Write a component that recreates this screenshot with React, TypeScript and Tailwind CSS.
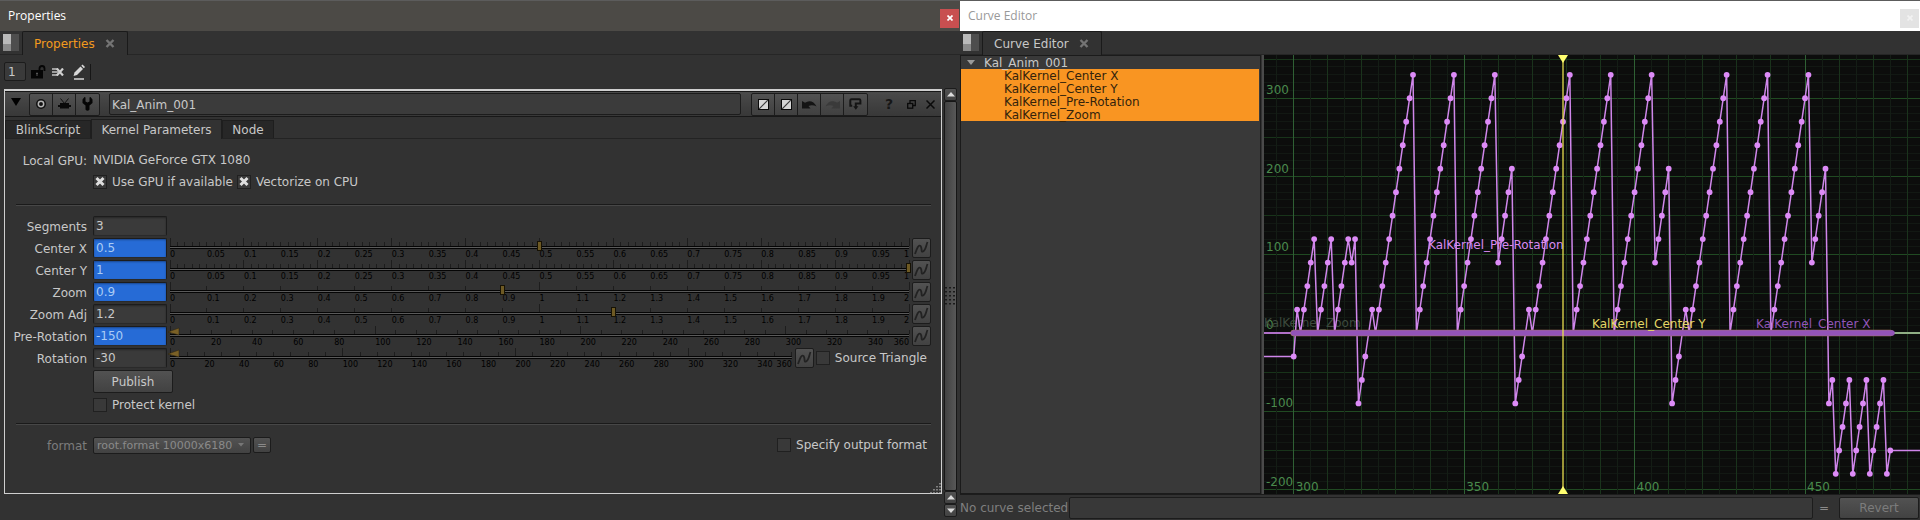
import React, { useState } from "react";

/* ---------- shared styles ---------- */

const field =
  "h-5 w-full rounded-xs border border-[#1c1c1c] border-b-[#2a2a2a] pl-[2px] text-[12px] leading-[18px] outline-none shadow-[inset_0_1px_2px_rgba(0,0,0,0.35)]";
const raised = "border border-[#1c1c1c] bg-linear-to-b from-[#525252] to-[#424242]";

/* ---------- icons ---------- */

function PaneIcon() {
  return (
    <svg width="16" height="17" viewBox="0 0 16 17" className="block">
      <rect width="8" height="10" fill="#b9b9b9" />
      <rect y="10" width="8" height="7" fill="#8a8a8a" />
      <rect x="8" width="8" height="17" fill="#4e4e4e" />
    </svg>
  );
}

function CurveIcon() {
  return (
    <svg width="17" height="18" viewBox="0 0 17 18" className="block">
      <path d="M2 15 C4 9 5.500 5.500 7.500 7 C9.500 9 7.500 13.500 10 12.500 C13 11 13 6.500 14.500 3" fill="none" stroke="#222" strokeWidth="1.800" />
    </svg>
  );
}

function HalfSquareIcon() {
  return (
    <svg width="11" height="11" viewBox="0 0 11 11" className="block">
      <rect x="0.500" y="0.500" width="10" height="10" fill="#d6d6d6" stroke="#0a0a0a" />
      <path d="M1.200 9.800 L9.800 1.200" stroke="#3a3a3a" strokeWidth="1.200" />
    </svg>
  );
}

function ArrowCurved({ color, flip }: { color: string; flip?: boolean }) {
  return (
    <svg width="15" height="9" viewBox="0 0 15 9" className={flip ? "block -scale-x-100" : "block"}>
      <path d="M0 1 V8.500 H8.500 L6.500 6 C9 4.800 12 5 14.500 6.500 C12 1 7 0 3 2.800 Z" fill={color} />
    </svg>
  );
}

/* ---------- tabs and title bars ---------- */

function PaneTabs({ label, active }: { label: string; active?: boolean }) {
  return (
    <div className="flex h-6 items-end border-b border-[#262626] pl-[3px]">
      <button aria-label="Pane menu" className="mr-[3px] mb-[3px]">
        <PaneIcon />
      </button>
      <div className="-mb-px flex h-6 items-center gap-[10px] rounded-t-xs border border-b-0 border-[#1a1a1a] bg-[#323232] pr-3 pl-[11px]">
        <span className={active ? "text-[#f29a1e]" : "text-[#c8c8c8]"}>{label}</span>
        <button aria-label={`Close ${label}`} className="mb-px text-[#747474]">
          <svg width="10" height="9" viewBox="0 0 10 9" className="block">
            <path d="M1.500 1 L8.500 8 M8.500 1 L1.500 8" stroke="currentColor" strokeWidth="2.400" />
          </svg>
        </button>
      </div>
    </div>
  );
}

/* ---------- ruler slider ---------- */

type Scale = { max: number; label: number; minor: number; major: number; digits: number };

const unit: Scale = { max: 1, label: 0.05, minor: 0.01, major: 0.1, digits: 2 };
const double: Scale = { max: 2, label: 0.1, minor: 0.1, major: 1, digits: 1 };
const degrees: Scale = { max: 360, label: 20, minor: 10, major: 100, digits: 0 };

function Ruler({ name, scale, value }: { name: string; scale: Scale; value: number }) {
  const [v, setV] = useState(value);
  const pct = (n: number) => `${(n / scale.max) * 100}%`;
  const ticks = Array.from({ length: Math.round(scale.max / scale.minor) + 1 }, (_, i) => i * scale.minor);
  const labels = Array.from({ length: Math.round(scale.max / scale.label) + 1 }, (_, i) => i * scale.label);
  const isMajor = (n: number) => Math.abs(n / scale.major - Math.round(n / scale.major)) < 0.001;
  const under = v < 0;
  return (
    <div className="relative h-5 min-w-0 flex-1">
      <svg width="100%" height="20" className="block overflow-visible">
        {ticks.map((t) => (
          <line
            key={t}
            x1={pct(t)}
            x2={pct(t)}
            y1={isMajor(t) ? 0 : 4}
            y2={8}
            stroke="#1d1d1d"
            shapeRendering="crispEdges"
          />
        ))}
        <rect y="8" width="100%" height="3" fill="#050505" />
        <rect y="9" width="100%" height="1" fill="#5a5a5a" />
        {labels.map((t) => {
          const last = t > scale.max - scale.label / 2;
          return (
            <text key={t} x={pct(t)} y="19" fontSize="8" fill="#000" textAnchor={last ? "end" : "start"}>
              {Number(t.toFixed(scale.digits))}
            </text>
          );
        })}
        {under && <path d="M-2 6 L9 2 V9 Z" fill="#7a6026" stroke="#2a220c" strokeWidth="0.500" />}
      </svg>
      <input
        type="range"
        aria-label={`${name} slider`}
        min={0}
        max={scale.max}
        step={scale.minor}
        value={Math.max(0, v)}
        onChange={(e) => setV(Number(e.target.value))}
        className={
          "absolute inset-x-[-2px] top-0 h-4 w-[calc(100%+4px)] appearance-none bg-transparent [&::-webkit-slider-thumb]:h-[10px] [&::-webkit-slider-thumb]:w-[5px] [&::-webkit-slider-thumb]:appearance-none [&::-webkit-slider-thumb]:border [&::-webkit-slider-thumb]:border-[#171204] [&::-webkit-slider-thumb]:bg-[#6e5a24] " +
          (under ? "[&::-webkit-slider-thumb]:opacity-0" : "")
        }
      />
    </div>
  );
}

function CurveButton({ name }: { name: string }) {
  return (
    <button aria-label={`${name} animation`} className={`${raised} h-5 w-[19px] shrink-0 rounded-xs`}>
      <CurveIcon />
    </button>
  );
}

function Tick({ label, checked }: { label: string; checked?: boolean }) {
  return (
    <label className="flex shrink-0 items-center gap-[5px]">
      <span className="grid">
        <input
          type="checkbox"
          defaultChecked={checked}
          className="peer col-start-1 row-start-1 size-[14px] appearance-none border border-[#202020] bg-[#393939]"
        />
        <svg viewBox="0 0 14 14" className="pointer-events-none col-start-1 row-start-1 hidden size-[14px] peer-checked:block">
          <path d="M3.500 3 L10.500 10 M10.500 3 L3.500 10" stroke="#dedede" strokeWidth="3" />
        </svg>
      </span>
      <span>{label}</span>
    </label>
  );
}

type Knob = { name: string; value: string; keyed?: boolean; scale?: Scale };

const knobs: Knob[] = [
  { name: "Segments", value: "3" },
  { name: "Center X", value: "0.5", keyed: true, scale: unit },
  { name: "Center Y", value: "1", keyed: true, scale: unit },
  { name: "Zoom", value: "0.9", keyed: true, scale: double },
  { name: "Zoom Adj", value: "1.2", scale: double },
  { name: "Pre-Rotation", value: "-150", keyed: true, scale: degrees },
  { name: "Rotation", value: "-30", scale: degrees },
];

function KnobRow({ knob }: { knob: Knob }) {
  const id = knob.name.replace(" ", "-").toLowerCase();
  return (
    <div className="flex h-5 items-center">
      <label htmlFor={id} className="w-[82px] shrink-0 pt-[2px] text-right">
        {knob.name}
      </label>
      <div className="mr-[3px] ml-[6px] w-[74px] shrink-0">
        <input
          id={id}
          defaultValue={knob.value}
          className={`${field} ${knob.keyed ? "bg-[#266bd6] text-[#a9cbf5]" : "bg-[#3a3a3a] text-[#c8c8c8]"}`}
        />
      </div>
      {knob.scale && (
        <>
          <Ruler name={knob.name} scale={knob.scale} value={Number(knob.value)} />
          <div className="ml-[3px] flex items-center gap-[2px]">
            <CurveButton name={knob.name} />
            {knob.name === "Rotation" && (
              <div className="pr-1">
                <Tick label="Source Triangle" />
              </div>
            )}
          </div>
        </>
      )}
    </div>
  );
}

function Rule() {
  return <div className="h-[2px] border-t border-b border-t-[#1a1a1a] border-b-[#474747]" />;
}

function ScrollButton({ down }: { down?: boolean }) {
  return (
    <button aria-label={down ? "Scroll down" : "Scroll up"} className={`${raised} flex h-[13px] items-center justify-center rounded-xs`}>
      <svg width="8" height="5" viewBox="0 0 8 5" className={down ? "block rotate-180" : "block"}>
        <path d="M0 4.500 L4 0 L8 4.500 Z" fill="#dcdcdc" />
      </svg>
    </button>
  );
}

/* ---------- properties window ---------- */

function NodeHeader() {
  const cell = "flex h-[21px] w-[23px] items-center justify-center border-r border-[#1c1c1c] last:border-r-0";
  const group = "flex rounded-xs border border-[#1c1c1c] bg-linear-to-b from-[#525252] to-[#404040]";
  return (
    <div className="flex h-[26px] items-center border-t border-b border-[#181818] bg-linear-to-b from-[#4a4a4a] to-[#383838]">
      <button aria-label="Collapse" className="mr-2 mb-1 ml-[6px]">
        <svg width="10" height="8" viewBox="0 0 10 8" className="block">
          <path d="M0 0 H10 L5 8 Z" fill="#000" />
        </svg>
      </button>
      <div className={group}>
        <button aria-label="Center node" className={cell}>
          <svg width="12" height="12" viewBox="0 0 12 12">
            <circle cx="6" cy="6" r="5" fill="#111" />
            <circle cx="6" cy="6" r="2.700" fill="none" stroke="#b4b4b4" strokeWidth="1.500" />
          </svg>
        </button>
        <button aria-label="Hide input" className={cell}>
          <svg width="13" height="12" viewBox="0 0 13 12">
            <path d="M2 5 H11 V7 H13 V9 H11 V10.500 H2 V9 H0 V7 H2 Z" fill="#0a0a0a" />
            <path d="M2.500 0.500 L6.500 5.500 L10.500 0.500 M6.500 5 V10" fill="none" stroke="#0a0a0a" strokeWidth="0.900" />
          </svg>
        </button>
        <button aria-label="Manage user knobs" className={cell}>
          <svg width="11" height="14" viewBox="0 0 11 14">
            <path d="M2.500 0 L0.500 2.500 V6 L3.500 8.500 V12.500 Q5.500 15 7.500 12.500 V8.500 L10.500 6 V2.500 L8.500 0 L7.500 0.500 V4.500 L5.500 5.500 L3.500 4.500 V0.500 Z" fill="#050505" />
          </svg>
        </button>
      </div>
      <input
        aria-label="Node name"
        defaultValue="Kal_Anim_001"
        className="ml-[9px] h-[22px] min-w-0 flex-1 rounded-xs border border-[#1c1c1c] bg-[#3b3b3b] pt-[2px] pl-[2px] text-[12px] text-[#c8c8c8] outline-none"
      />
      <div className={`${group} ml-[10px]`}>
        <button aria-label="Node color" className={cell}>
          <HalfSquareIcon />
        </button>
        <button aria-label="GL color" className={cell}>
          <HalfSquareIcon />
        </button>
        <button aria-label="Undo" className={cell}>
          <ArrowCurved color="#141414" />
        </button>
        <button aria-label="Redo" className={cell}>
          <ArrowCurved color="#3a3a3a" flip />
        </button>
        <button aria-label="Revert knobs" className={cell}>
          <svg width="13" height="12" viewBox="0 0 13 12">
            <path d="M3.200 7.800 H1.300 V2.500 Q1.300 1.300 2.500 1.300 H10.200 Q11.400 1.300 11.400 2.500 V5.600 H6.800 V9" fill="none" stroke="#141414" strokeWidth="2" />
            <path d="M4.200 8.300 H9.400 L6.800 11.800 Z" fill="#141414" />
          </svg>
        </button>
      </div>
      <div className="mr-[6px] ml-[15px] flex items-center gap-[10px]">
        <button aria-label="Help" className="mr-[2px] w-3 text-[14px] leading-4 font-bold text-[#161616]">
          ?
        </button>
        <button aria-label="Float panel">
          <svg width="9" height="9" viewBox="0 0 9 9" className="block">
            <path d="M3 3 V0.700 H8.300 V5.500 H6" fill="none" stroke="#0a0a0a" strokeWidth="1.300" />
            <rect x="0.700" y="3.500" width="5" height="4.700" fill="none" stroke="#0a0a0a" strokeWidth="1.300" />
          </svg>
        </button>
        <button aria-label="Close panel">
          <svg width="9" height="9" viewBox="0 0 9 9" className="block">
            <path d="M0.500 0.500 L8.500 8.500 M8.500 0.500 L0.500 8.500" stroke="#0a0a0a" strokeWidth="1.500" />
          </svg>
        </button>
      </div>
    </div>
  );
}

function PropertiesWindow() {
  const idle = "h-[18px] border border-b-0 border-[#1e1e1e] bg-[#272727] pt-px";
  return (
    <section className="flex min-w-0 flex-1 flex-col">
      <header className="flex h-[31px] items-center border-t border-[#5c5c5c] bg-[#4c4a46] pl-2 font-['Open_Sans',sans-serif] text-[12px] text-white">
        <h1 className="flex-1">Properties</h1>
        <button aria-label="Close window" className="mt-1 mr-px flex h-[19px] w-[19px] items-center justify-center bg-[#c84f50]">
          <svg width="6" height="6" viewBox="0 0 6 6">
            <path d="M0.500 0.500 L5.500 5.500 M5.500 0.500 L0.500 5.500" stroke="#fff" strokeWidth="1.700" />
          </svg>
        </button>
      </header>
      <PaneTabs label="Properties" active />
      <div className="flex h-[33px] items-center pl-1">
        <input
          aria-label="Maximum panels"
          defaultValue="1"
          className="h-[19px] w-[22px] rounded-xs border border-[#1c1c1c] bg-[#3a3a3a] pl-[3px] text-[12px] text-[#c8c8c8] outline-none"
        />
        <button aria-label="Lock panels" className="ml-[5px]">
          <svg width="15" height="14" viewBox="0 0 15 14" className="block">
            <rect y="5" width="12" height="8.500" fill="#050505" />
            <path d="M8.500 5.500 V3.500 Q8.500 1 11 1 Q13.500 1 13.500 3.500 V6" fill="none" stroke="#050505" strokeWidth="1.800" />
            <path d="M6 7.500 V11 M5 8.500 H7" stroke="#555" />
          </svg>
        </button>
        <button aria-label="Clear panels" className="ml-[6px]">
          <svg width="12" height="8" viewBox="0 0 12 8" className="block">
            <path d="M0 1 H5.500 M0 4 H6.500 M0 7 H5.500" stroke="#c4c4c4" strokeWidth="1.500" />
            <path d="M4.800 0.500 L11 7.500 M11 0.500 L4.800 7.500" stroke="#d0d0d0" strokeWidth="2.200" />
          </svg>
        </button>
        <button aria-label="Edit panels" className="ml-[9px] border-r border-[#161616] pr-1">
          <svg width="13" height="16" viewBox="0 0 13 16" className="block">
            <path d="M0.500 12 L1.500 8.500 L7.500 2.500 L10 5 L4 11 Z" fill="#d8d8d8" />
            <path d="M8.300 1.700 L9.500 0.500 L12 3 L10.800 4.200 Z" fill="#d8d8d8" />
            <path d="M1 15 H11" stroke="#e2e2e2" strokeWidth="1.400" />
          </svg>
        </button>
      </div>
      <div className="flex min-h-0 flex-1 pl-1">
        <div className="mt-px mb-[26px] flex min-w-0 flex-1 flex-col border border-t-2 border-[#cfcfcf]">
          <NodeHeader />
          <nav className="flex h-[22px] items-end border-b border-[#232323]">
            <button className={`${idle} w-[86px]`}>BlinkScript</button>
            <button className="-mb-px h-5 w-[131px] border border-b-0 border-[#1e1e1e] bg-[#323232]">Kernel Parameters</button>
            <button className={`${idle} w-[52px]`}>Node</button>
          </nav>
          <div className="flex flex-1 flex-col pr-[10px] pl-[11px]">
            <div className="-ml-[11px] flex pt-[13px] leading-4">
              <span className="w-[82px] pt-px text-right">Local GPU:</span>
              <span className="ml-[6px]">NVIDIA GeForce GTX 1080</span>
            </div>
            <div className="mt-[5px] flex h-[15px] items-center gap-1 pl-[77px]">
              <Tick label="Use GPU if available" checked />
              <Tick label="Vectorize on CPU" checked />
            </div>
            <div className="mt-[15px]">
              <Rule />
            </div>
            <div className="mt-[10px] -ml-[11px] flex flex-col gap-[2px]">
              {knobs.map((k) => (
                <KnobRow key={k.name} knob={k} />
              ))}
            </div>
            <div className="mt-[2px] flex flex-col items-start gap-1 pl-[77px]">
              <button className={`${raised} h-[23px] w-20 rounded-xs`}>Publish</button>
              <Tick label="Protect kernel" />
            </div>
            <div className="mt-[10px]">
              <Rule />
            </div>
            <div className="mt-[11px] -ml-[11px] flex h-[18px] items-center">
              <label htmlFor="format" className="w-[82px] pt-px text-right text-[#7c7c7c]">
                format
              </label>
              <div className={`${raised} ml-[6px] flex h-[17px] items-center rounded-xs pr-[6px]`}>
                <select id="format" className="appearance-none bg-transparent pl-[3px] text-[11px] leading-[15px] text-[#8a8a8a] outline-none">
                  <option>root.format 10000x6180</option>
                </select>
                <svg width="6" height="4" viewBox="0 0 6 4" className="ml-[5px] block">
                  <path d="M0 0 H6 L3 3.500 Z" fill="#777" />
                </svg>
              </div>
              <button aria-label="Format expression" className={`${raised} ml-[2px] flex h-4 w-[18px] items-center justify-center rounded-xs text-[#8a8a8a]`}>
                =
              </button>
              <div className="ml-auto pr-1">
                <Tick label="Specify output format" />
              </div>
            </div>
            <div className="mt-auto -mr-[10px] self-end">
              <svg width="11" height="10" viewBox="0 0 11 10" className="block">
                <path d="M10 0 V10 M7 3 V10 M4 6 V10 M1 9 V10" stroke="#aaa" strokeWidth="1.300" strokeDasharray="1.500 1.500" />
              </svg>
            </div>
          </div>
        </div>
        <div className="relative mr-[3px] mb-[3px] ml-[2px] flex w-[13px] flex-col">
          <ScrollButton />
          <div className="flex-1 rounded-xs border border-[#161616] bg-linear-to-r from-[#414141] to-[#585858]" />
          <ScrollButton />
          <ScrollButton down />
          <svg width="11" height="20" className="absolute top-[199px] left-px">
            <path d="M1 0 V20 M5 0 V20 M9 0 V20" stroke="#1a1a1a" strokeWidth="2" strokeDasharray="1.500 2.500" />
          </svg>
        </div>
      </div>
    </section>
  );
}

/* ---------- curve graph ---------- */

const FRAME = 3.409;
const UNIT = 0.7825;
const px = (frame: number) => 29.7 + (frame - 300) * FRAME;
const py = (value: number) => 278 - value * UNIT;

const ramp = (from: number, to: number) => Array.from({ length: (to - from) / 30 + 1 }, (_, i) => from + i * 30);
const cycle = [...ramp(-90, 30), ...ramp(0, 330), ...ramp(0, 330), ...ramp(0, 330), ...ramp(90, 210)];
const rotation = [
  -30, 30,
  ...ramp(0, 120),
  ...ramp(0, 120),
  ...ramp(0, 120),
  90, 120,
  ...cycle,
  ...cycle,
  ...cycle,
  -90, -60,
  ...ramp(-180, -60),
  ...ramp(-180, -60),
  ...ramp(-180, -60),
  -180, -150,
];
const points = rotation.map((v, i) => [px(300 + i), py(v)] as const);
const playhead = px(379);

function Graph() {
  const columns = Array.from({ length: 40 }, (_, i) => 295 + i * 5);
  const rows = Array.from({ length: 57 }, (_, i) => -210 + i * 10);
  return (
    <svg width="100%" height="100%" className="block min-h-[439px] flex-1 bg-[#0c0d0c]" fontSize="12">
      <g shapeRendering="crispEdges">
        {rows.map((v) => (
          <line key={v} x1="0" x2="100%" y1={py(v)} y2={py(v)} stroke={v % 100 === 0 ? "#204a22" : v % 50 === 0 ? "#18341a" : "#121813"} />
        ))}
        {columns.map((f) => (
          <line key={f} y1="0" y2="100%" x1={px(f)} x2={px(f)} stroke={f % 50 === 0 ? "#2f6034" : f % 10 === 0 ? "#1a331c" : "#141d15"} />
        ))}
      </g>
      <g fill="#4a8a4c">
        {[300, 200, 100, 0, -100, -200].map((v) => (
          <text key={v} x="2" y={py(v) - 4}>
            {v}
          </text>
        ))}
        {[300, 350, 400, 450].map((f) => (
          <text key={f} x={px(f) + 2} y="436">
            {f}
          </text>
        ))}
      </g>
      <text x="0" y="272" fill="#3d4a3e">
        KalKernel_Zoom
      </text>
      <line x1="0" x2="100%" y1="278" y2="278" stroke="#8fae84" strokeWidth="2" />
      <line x1="0" x2={px(300)} y1="278" y2="278" stroke="#b070c8" strokeWidth="2" />
      <path
        d={`M0 ${py(-30)} L${points.map(([x, y]) => `${x} ${y}`).join(" L")} H4000`}
        fill="none"
        stroke="#cf86ea"
        strokeWidth="1.500"
      />
      {points.map(([x, y], i) => (
        <circle key={i} cx={x} cy={y} r="2.900" fill="#dd8bf7" />
      ))}
      <line x1={px(300)} x2={px(475)} y1="278" y2="278" stroke="#a3785c" strokeWidth="6.500" strokeLinecap="round" />
      <line x1={px(300)} x2={px(475.5)} y1="278" y2="278" stroke="#9353b8" strokeWidth="5.500" strokeLinecap="round" />
      <text x="164" y="194" fill="#d98af2">
        KalKernel_Pre-Rotation
      </text>
      <text x="328" y="273" fill="#e3d665">
        KalKernel_Center Y
      </text>
      <text x="492" y="273" fill="#9155b8">
        KalKernel_Center X
      </text>
      <line x1={playhead} x2={playhead} y1="0" y2="100%" stroke="#e8e04e" strokeOpacity="0.650" strokeWidth="2" />
      <path d={`M${playhead - 5} 0 h10 l-5 8 Z`} fill="#ffff70" />
      <path d={`M${playhead - 5} 439 h10 l-5 -8 Z`} fill="#ffff70" />
    </svg>
  );
}

/* ---------- curve editor window ---------- */

const curves = ["KalKernel_Center X", "KalKernel_Center Y", "KalKernel_Pre-Rotation", "KalKernel_Zoom"];

function CurveEditorWindow() {
  return (
    <section className="flex min-w-0 flex-1 flex-col">
      <header className="flex h-[31px] items-center border-t border-[#5c5c5c] bg-white pl-2 font-['Open_Sans',sans-serif] text-[12px] text-[#999]">
        <h1 className="flex-1">Curve Editor</h1>
        <button aria-label="Close window" className="mt-1 mr-px flex h-[19px] w-[19px] items-center justify-center bg-[#e3e3e3]">
          <svg width="6" height="6" viewBox="0 0 6 6">
            <path d="M0.500 0.500 L5.500 5.500 M5.500 0.500 L0.500 5.500" stroke="#f2f2f2" strokeWidth="1.700" />
          </svg>
        </button>
      </header>
      <PaneTabs label="Curve Editor" />
      <div className="flex min-h-0 flex-1">
        <div className="w-[301px] shrink-0 border border-[#1b1b1b] bg-[#393939] pr-px leading-[15px]">
          <div className="flex h-[13px] items-center gap-[9px] pl-[6px]">
            <svg width="8" height="5" viewBox="0 0 8 5">
              <path d="M0 0 H8 L4 5 Z" fill="#9a9a9a" />
            </svg>
            <span className="pt-px">Kal_Anim_001</span>
          </div>
          <ul className="bg-[#f99522] text-[#33230c]">
            {curves.map((c) => (
              <li key={c} className="h-[13px] pl-[43px]">
                {c}
              </li>
            ))}
          </ul>
        </div>
        <div className="ml-px flex min-w-0 flex-1 border-l-2 border-[#4a4a4a] bg-[#0c0d0c]">
          <Graph />
        </div>
      </div>
      <footer className="flex h-[26px] items-center border-t border-[#1c1c1c] pt-px pr-px">
        <label htmlFor="expr" className="w-[109px] shrink-0 whitespace-nowrap text-[#7f7f7f]">
          No curve selected
        </label>
        <input id="expr" readOnly className="h-[22px] min-w-0 flex-1 rounded-xs border border-[#1c1c1c] bg-[#383838] outline-none" />
        <span className="w-[26px] pr-1 text-center text-[#8a8a8a]">=</span>
        <button className={`${raised} h-[22px] w-20 rounded-xs text-[#7c7c7c]`}>Revert</button>
      </footer>
    </section>
  );
}

export default function App() {
  return (
    <main className="flex min-h-screen bg-[#323232] font-['DejaVu_Sans',Verdana,sans-serif] text-[12px] leading-4 text-[#c8c8c8]">
      <PropertiesWindow />
      <CurveEditorWindow />
    </main>
  );
}
